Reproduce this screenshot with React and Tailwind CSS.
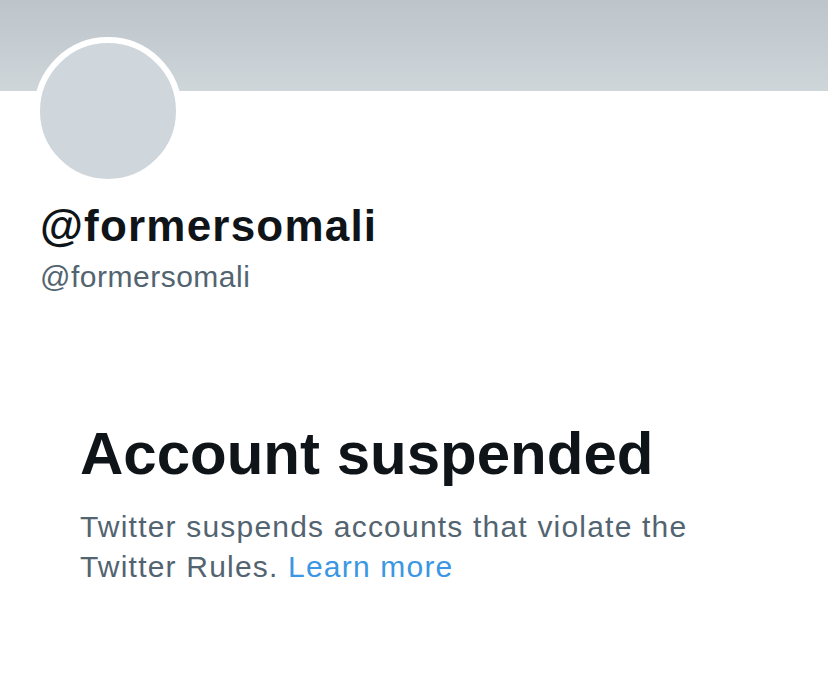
import React from 'react';

const App = () => {
  return (
    <div className="w-[828px] h-[698px] bg-white overflow-hidden" style={{ fontFamily: '"Liberation Sans", Arial, sans-serif' }}>
      {/* Banner */}
      <div className="h-[91px] bg-gradient-to-b from-[#bdc4ca] to-[#cfd6da]" />

      {/* Profile header */}
      <div className="px-[34px]">
        <div className="-mt-[54px] w-[148px] h-[148px] rounded-full border-[6px] border-white bg-[#cfd7dd]" />
        <div className="ml-[6px] mt-[16px]">
          <div className="text-[44px] leading-[50px] font-extrabold text-[#0f1419] tracking-[1.2px]">
            @formersomali
          </div>
          <div className="mt-[6px] text-[30px] leading-[40px] text-[#536471] tracking-[0.5px]">
            @formersomali
          </div>
        </div>
      </div>

      {/* Suspended notice */}
      <div className="px-[80px] mt-[121px]">
        <h1 className="text-[60px] leading-[72px] font-bold text-[#0f1419]">
          Account suspended
        </h1>
        <p className="mt-[17px] text-[30px] leading-[40px] text-[#536471] tracking-[1.2px]">
          Twitter suspends accounts that violate the<br />
          Twitter Rules. <a href="#" className="text-[#3b97e3]">Learn more</a>
        </p>
      </div>
    </div>
  );
};

export default App;
